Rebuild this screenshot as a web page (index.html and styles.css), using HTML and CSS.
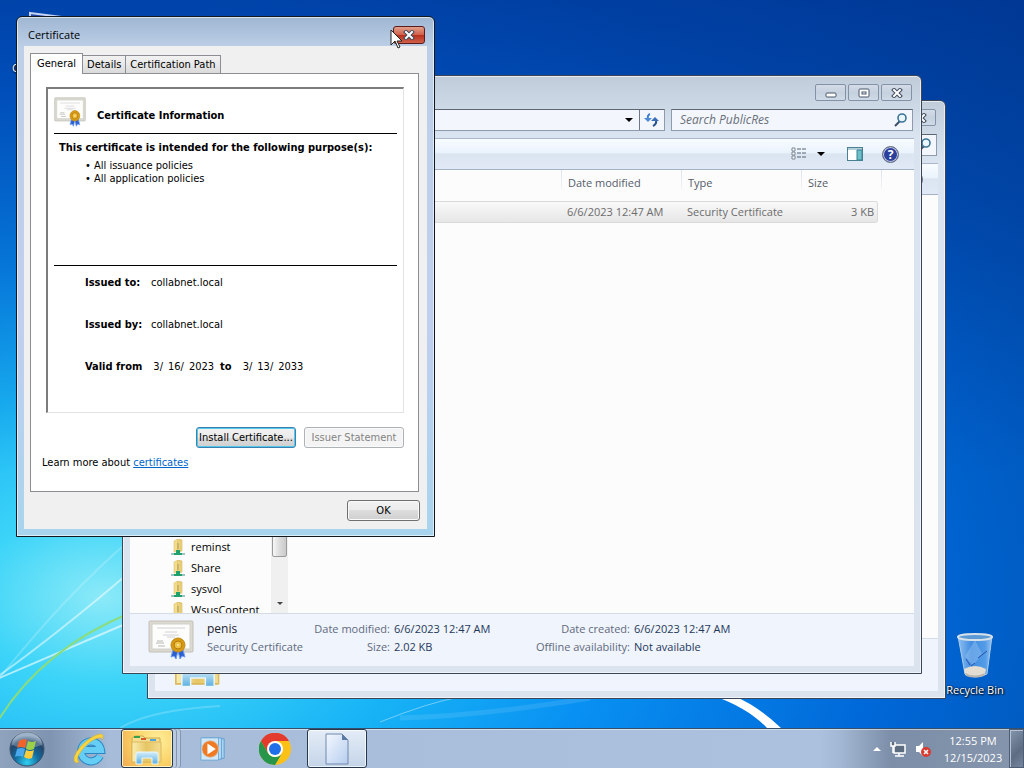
FILE: index.html
```html
<!DOCTYPE html>
<html lang="en">
  <head>
    <meta charset="UTF-8" />
    <meta name="viewport" content="width=device-width, initial-scale=1.0" />
    <title>Desktop</title>
    <link rel="stylesheet" href="styles.css" />
  </head>
  <body>
    <!-- Shared icons -->
    <svg class="sprite" aria-hidden="true">
      <defs>
        <linearGradient id="gold" x1="0" x2="1">
          <stop offset="0" stop-color="#fbeeb4" />
          <stop offset="0.5" stop-color="#e6c664" />
          <stop offset="1" stop-color="#f4dd92" />
        </linearGradient>
        <linearGradient id="glass" x1="0" x2="0" y1="0" y2="1">
          <stop offset="0" stop-color="#d5eefa" />
          <stop offset="1" stop-color="#5aaee0" />
        </linearGradient>
        <linearGradient id="paper" x1="0" x2="1" y1="0" y2="1">
          <stop offset="0" stop-color="#f3f8ff" />
          <stop offset="1" stop-color="#b6cdee" />
        </linearGradient>
        <linearGradient id="bin" x1="0" x2="1">
          <stop offset="0" stop-color="#a8d0f6" />
          <stop offset="0.4" stop-color="#4c94e4" />
          <stop offset="0.8" stop-color="#62a6ec" />
          <stop offset="1" stop-color="#b4d6f6" />
        </linearGradient>
        <radialGradient id="orb" cx="0.5" cy="0.9" r="0.8">
          <stop offset="0" stop-color="#2fd0f2" />
          <stop offset="0.45" stop-color="#126a9e" />
          <stop offset="0.8" stop-color="#23456a" />
          <stop offset="1" stop-color="#7d9ab8" />
        </radialGradient>
        <symbol id="certificate" viewBox="0 0 46 40">
          <rect x="1" y="1" width="44" height="31" rx="1" fill="#dcdad0" stroke="#c2c0b6" />
          <rect x="4" y="4" width="38" height="25" fill="#fdfdfb" stroke="#d0d0ca" />
          <path d="M9 8h28M17 12h12M15 15h16M19 17h8" stroke="#d2d2d8" />
          <path d="M8 23h8M10 26h7M9 21h6" stroke="#b8b8b8" />
          <path d="M25 30l-2 7 3-1 2 3 2-8zM35 30l2 7-3-1-2 3-2-8z" fill="#2a5fd0" stroke="#6f9bf0" />
          <circle cx="30" cy="25" r="7" fill="#d99a12" stroke="#c08a1c" />
          <circle cx="30" cy="25" r="4" fill="#f0c040" stroke="#b07c10" />
          <circle cx="30" cy="25" r="1" fill="#fff2b8" />
        </symbol>
        <symbol id="share-folder" viewBox="0 0 16 16">
          <path d="M4 2l4-2v12l-4 1z" fill="#f3dc8c" stroke="#d9b95c" stroke-width="0.5" />
          <path d="M8 0l4 1v11l-4 1z" fill="url(#gold)" stroke="#c9a647" stroke-width="0.5" />
          <path d="M8 4v6" stroke="#a89a5c" />
          <path d="M1 15h14" stroke="#9cc4c0" stroke-width="2" />
          <path d="M4 15h8" stroke="#1fa06c" stroke-width="2" />
          <path d="M8 11v4" stroke="#1fa06c" stroke-width="4" />
        </symbol>
        <symbol id="magnifier" viewBox="0 0 14 14">
          <path d="M1 13l5-5" stroke="#3a4f66" stroke-width="2" />
          <circle cx="8" cy="5" r="4" fill="#eaf6fc" stroke="#3b7596" stroke-width="1.6" />
        </symbol>
        <symbol id="folders" viewBox="0 0 34 32">
          <path d="M2 5l3-2h8l2 2h15v24H2z" fill="#f6df90" stroke="#d0a848" />
          <path d="M4 4h6" stroke="#38a04c" stroke-width="2" />
          <path d="M11 6h5" stroke="#d25a2c" stroke-width="2" />
          <path d="M20 7h6" stroke="#4ea6d8" stroke-width="2" />
          <path d="M2 9h29v20H2z" fill="url(#gold)" stroke="#dcb95a" />
          <path d="M6 31V21q0-2 2-2h18q2 0 2 2v10h-6v-6H12v6z" fill="url(#glass)" stroke="#e9f6fd" />
        </symbol>
        <symbol id="cross" viewBox="0 0 12 10">
          <path d="M3 2l6 6M9 2L3 8" stroke="#3e4a5c" stroke-width="4" stroke-linecap="square" />
          <path d="M3 2l6 6M9 2L3 8" stroke="#fff" stroke-width="2" stroke-linecap="square" />
        </symbol>
      </defs>
    </svg>

    <main class="desktop">
      <svg class="wallpaper" viewBox="0 0 1024 728" preserveAspectRatio="none" aria-hidden="true">
        <g fill="none" stroke="#fff">
          <path d="M-10 682Q50 640 130 572" stroke-opacity="0.5" stroke-width="2" />
          <path d="M-10 690Q60 600 130 540" stroke-opacity="0.2" stroke-width="2" />
          <path d="M-10 682Q60 652 130 622" stroke-opacity="0.6" stroke-width="2" />
          <path d="M120 728Q150 710 220 706" stroke-opacity="0.2" stroke-width="2" />
          <path d="M380 722Q430 702 460 697" stroke-opacity="0.4" />
          <path d="M400 718Q480 716 590 698" stroke-opacity="0.1" stroke-width="5" />
          <path d="M-4 724Q40 650 130 613" stroke="#8bdc7c" stroke-width="2" />
        </g>
        <path d="M714 696Q748 708 767 728H781Q758 706 734 696z" fill="#fff" />
      </svg>

      <div class="shortcut computer">
        <svg width="48" height="48" viewBox="0 0 48 48" aria-hidden="true">
          <path d="M16 3l32 4v30l-32-4z" fill="#2448a8" stroke="#c5d3f5" stroke-width="2" />
        </svg>
        <span>Computer</span>
      </div>

      <div class="shortcut recycle-bin">
        <svg width="48" height="48" viewBox="0 0 48 48" aria-hidden="true">
          <path d="M7 4h34l-5 38q-12 6-22 0z" fill="url(#bin)" fill-opacity="0.85" stroke="#a9cbee" />
          <path d="M24 8l7 14-9 12-8-10z" fill="#8dbdf0" fill-opacity="0.5" />
          <path d="M15 27l4 6M27 26l9-7M20 34l4-3" stroke="#2450a8" />
          <path d="M13 37q11-6 22 0l-1 6q-10 4-20 0z" fill="#e4ddd2" />
          <path d="M14 41q10 5 20 0l-1 3q-9 3-18 0z" fill="#b8b4b0" />
          <ellipse cx="24" cy="5" rx="17" ry="3" fill="#5c9ad6" stroke="#d6e1ea" stroke-width="2" />
        </svg>
        <span>Recycle Bin</span>
      </div>

      <!-- Explorer window at the back -->
      <section class="window explorer explorer-back" aria-label="Explorer">
        <div class="titlebar">
          <button class="caption-button" aria-label="Close"><svg width="12" height="10"><use href="#cross" /></svg></button>
        </div>
        <div class="navbar">
          <div class="search"><svg width="14" height="14"><use href="#magnifier" /></svg></div>
        </div>
        <div class="commandbar">
          <span class="help">?</span>
        </div>
        <div class="explorer-body"></div>
        <div class="details">
          <svg class="details-folder" width="50" height="46" viewBox="0 0 34 32" preserveAspectRatio="none"><use href="#folders" /></svg>
        </div>
      </section>

      <!-- Explorer window -->
      <section class="window explorer explorer-front" aria-label="PublicRes">
        <div class="titlebar">
          <button class="caption-button" aria-label="Minimize">
            <svg width="12" height="10" viewBox="0 0 12 10"><rect x="1" y="5" width="10" height="4" rx="1" fill="#fff" stroke="#4a566a" /></svg>
          </button>
          <button class="caption-button" aria-label="Maximize">
            <svg width="12" height="10" viewBox="0 0 12 10">
              <rect x="1" y="1" width="10" height="8" rx="1" fill="#fff" stroke="#4a566a" />
              <rect x="4" y="4" width="4" height="2" fill="#fff" stroke="#4a566a" />
            </svg>
          </button>
          <button class="caption-button" aria-label="Close"><svg width="12" height="10"><use href="#cross" /></svg></button>
        </div>

        <div class="navbar">
          <div class="address">
            <input class="address-input" type="text" aria-label="Address" />
            <button class="address-drop" aria-label="Previous locations"><i class="arrow"></i></button>
            <button class="refresh" aria-label="Refresh">
              <svg width="16" height="16" viewBox="0 0 16 16">
                <path d="M6 2Q3 3 4 8" fill="none" stroke="#3d7fd0" stroke-width="2" />
                <path d="M0 6h8l-4 4z" fill="#4a8ad8" />
                <path d="M12 8q1 4-3 6" fill="none" stroke="#2a4f8c" stroke-width="2" />
                <path d="M7 9h8l-4-4z" fill="#3a6cb8" />
              </svg>
            </button>
          </div>
          <div class="search">
            <input type="text" placeholder="Search PublicRes" aria-label="Search PublicRes" />
            <svg width="14" height="14"><use href="#magnifier" /></svg>
          </div>
        </div>

        <div class="commandbar">
          <button class="tool" aria-label="Change view">
            <svg width="16" height="14" viewBox="0 0 16 14">
              <path d="M1 1h3v3H1zM1 5h3v3H1zM1 9h3v3H1z" fill="#fff" stroke="#7c8794" />
              <path d="M6 2h4M11 2h4M6 6h4M11 6h4M6 10h4M11 10h4" stroke="#556272" />
            </svg>
          </button>
          <button class="tool tool-drop" aria-label="More options"><i class="arrow"></i></button>
          <button class="tool tool-pane" aria-label="Preview pane">
            <svg width="16" height="14" viewBox="0 0 16 14">
              <rect x="0.5" y="0.5" width="15" height="13" fill="#fff" stroke="#4a7f94" />
              <path d="M1 2h14" stroke="#6ba0b4" />
              <path d="M10 3h5v10h-5z" fill="#6cc0c8" stroke="#3b8294" />
            </svg>
          </button>
          <button class="help" aria-label="Help">?</button>
        </div>

        <div class="explorer-body">
          <nav class="tree">
            <ul>
              <li><svg width="16" height="16"><use href="#share-folder" /></svg>reminst</li>
              <li><svg width="16" height="16"><use href="#share-folder" /></svg>Share</li>
              <li><svg width="16" height="16"><use href="#share-folder" /></svg>sysvol</li>
              <li><svg width="16" height="16"><use href="#share-folder" /></svg>WsusContent</li>
            </ul>
            <div class="scrollbar">
              <div class="thumb"></div>
              <i class="arrow arrow-small"></i>
            </div>
          </nav>
          <div class="files">
            <table>
              <thead>
                <tr>
                  <th class="col-name"></th>
                  <th class="col-date">Date modified</th>
                  <th class="col-type">Type</th>
                  <th class="col-size">Size</th>
                  <th class="col-rest"></th>
                </tr>
              </thead>
              <tbody>
                <tr>
                  <td></td>
                  <td>6/6/2023 12:47 AM</td>
                  <td>Security Certificate</td>
                  <td class="size">3 KB</td>
                </tr>
              </tbody>
            </table>
          </div>
        </div>

        <div class="details">
          <svg width="46" height="40"><use href="#certificate" /></svg>
          <div class="details-name">
            <strong>penis</strong>
            <span>Security Certificate</span>
          </div>
          <dl class="details-first">
            <dt>Date modified:</dt>
            <dd>6/6/2023 12:47 AM</dd>
            <dt>Size:</dt>
            <dd>2.02 KB</dd>
          </dl>
          <dl class="details-second">
            <dt>Date created:</dt>
            <dd>6/6/2023 12:47 AM</dd>
            <dt>Offline availability:</dt>
            <dd>Not available</dd>
          </dl>
        </div>
      </section>

      <!-- Certificate dialog -->
      <section class="window dialog" role="dialog" aria-labelledby="dialog-title">
        <header class="dialog-title">
          <h1 id="dialog-title">Certificate</h1>
          <button class="dialog-close" aria-label="Close"><svg width="12" height="10"><use href="#cross" /></svg></button>
        </header>
        <div class="dialog-content">
          <div class="tabs" role="tablist">
            <button class="tab active" role="tab" aria-selected="true">General</button>
            <button class="tab" role="tab">Details</button>
            <button class="tab" role="tab">Certification Path</button>
          </div>
          <div class="tab-panel" role="tabpanel">
            <div class="certificate">
              <h2><svg width="32" height="30" viewBox="0 0 46 40" preserveAspectRatio="none"><use href="#certificate" /></svg>Certificate Information</h2>
              <div class="purposes">
                <h3>This certificate is intended for the following purpose(s):</h3>
                <ul>
                  <li>All issuance policies</li>
                  <li>All application policies</li>
                </ul>
              </div>
              <dl class="issue">
                <div><dt>Issued to:</dt><dd>collabnet.local</dd></div>
                <div><dt>Issued by:</dt><dd>collabnet.local</dd></div>
                <div class="valid">
                  <dt>Valid from</dt>
                  <dd><span>3/</span> <span>16/</span> <span>2023</span></dd>
                  <dt>to</dt>
                  <dd><span>3/</span> <span>13/</span> <span>2033</span></dd>
                </div>
              </dl>
            </div>
            <div class="actions">
              <button class="button default">Install Certificate...</button>
              <button class="button" disabled>Issuer Statement</button>
            </div>
            <p class="learn">Learn more about <a href="#">certificates</a></p>
          </div>
          <footer class="dialog-footer">
            <button class="button ok">OK</button>
          </footer>
        </div>
      </section>

      <svg class="cursor" width="14" height="20" viewBox="0 0 14 20" aria-hidden="true">
        <path d="M1 1v15l4-4 3 7 2-1-3-6h5z" fill="#fff" stroke="#222" />
      </svg>
    </main>

    <footer class="taskbar">
      <button class="start" aria-label="Start">
        <svg width="38" height="38" viewBox="0 0 38 38">
          <circle cx="19" cy="19" r="17" fill="url(#orb)" stroke="#3c5068" />
          <path d="M4 15a15 14 0 0 1 30 0q-15 6-30 0z" fill="#fff" fill-opacity="0.25" />
          <path d="M11 11q4-3 8-1l-2 8q-4-2-8 0z" fill="#f0642c" />
          <path d="M20 11q4 2 8 0l-2 8q-4 2-8 0z" fill="#9cd048" />
          <path d="M9 19q4-2 8 0l-2 8q-4-2-8 0z" fill="#4aa8ec" />
          <path d="M18 20q4 2 8 0l-2 8q-4 2-8-1z" fill="#fccc3c" />
        </svg>
      </button>
      <button class="task" aria-label="Internet Explorer">
        <svg width="34" height="34" viewBox="0 0 34 34">
          <path d="M28 24a10 10 0 1 1 1-6H11" fill="none" stroke="#2b86c4" stroke-width="8" />
          <path d="M28 24a10 10 0 1 1 1-6H11" fill="none" stroke="#66cdf4" stroke-width="6" />
          <path d="M4 31Q-2 27 9 14 20 3 28 2q5 0 2 6 1-3-4-2Q18 8 10 18 3 27 7 30z" fill="#f8d440" stroke="#d8aa20" stroke-width="0.5" />
        </svg>
      </button>
      <button class="task open stacked" aria-label="Windows Explorer">
        <svg width="34" height="32"><use href="#folders" /></svg>
      </button>
      <button class="task" aria-label="Windows Media Player">
        <svg width="26" height="26" viewBox="0 0 28 28">
          <path d="M6 3h20v21H6z" fill="#a9d4f2" stroke="#5b9cd0" />
          <path d="M3 2h20v23H3z" fill="#bfe0f6" stroke="#5b9cd0" />
          <path d="M1 2h19v24H1z" fill="#d2e8f8" stroke="#6ba6d4" />
          <circle cx="11" cy="14" r="9" fill="#f07a24" stroke="#d4c4b0" />
          <path d="M8 8l9 6-9 6z" fill="#fff" />
        </svg>
      </button>
      <button class="task" aria-label="Google Chrome">
        <svg width="32" height="32" viewBox="0 0 32 32">
          <circle cx="16" cy="16" r="16" fill="#fbc116" />
          <path d="M2 8A16 16 0 0 1 30 8H16L9 20z" fill="#e33b2e" />
          <path d="M2 8l7 12q3 4 7 4 3 0 6-2L16 32A16 16 0 0 1 2 8z" fill="#27964a" />
          <circle cx="16" cy="16" r="8" fill="#fff" />
          <circle cx="16" cy="16" r="6" fill="#1f70e8" />
        </svg>
      </button>
      <button class="task open current" aria-label="Certificate">
        <svg width="26" height="32" viewBox="0 0 26 32">
          <path d="M2 1h16l6 6v24H2z" fill="url(#paper)" stroke="#7088ac" />
          <path d="M18 1v6h6z" fill="#5a7ba4" />
        </svg>
      </button>

      <div class="tray">
        <button class="tray-icon" aria-label="Show hidden icons"><i class="arrow arrow-up"></i></button>
        <button class="tray-icon" aria-label="Network">
          <svg width="16" height="16" viewBox="0 0 16 16">
            <path d="M4 4h11v8H4z" fill="#5c6c80" stroke="#fff" stroke-width="1.5" />
            <path d="M5 15h9M9 12v3" stroke="#fff" stroke-width="1.5" />
            <path d="M1 1v4h4V1M3 5v7" fill="#5c6c80" stroke="#fff" stroke-width="1.5" />
          </svg>
        </button>
        <button class="tray-icon" aria-label="Volume muted">
          <svg width="16" height="16" viewBox="0 0 16 16">
            <path d="M1 5h3l4-4v14l-4-4H1z" fill="#fff" />
            <circle cx="11" cy="11" r="5" fill="#d83a30" />
            <path d="M9 9l4 4M13 9l-4 4" stroke="#fff" stroke-width="1.5" />
          </svg>
        </button>
      </div>
      <time class="clock"><span>12:55 PM</span><span>12/15/2023</span></time>
      <button class="show-desktop" aria-label="Show desktop"></button>
    </footer>
  </body>
</html>
```

FILE: styles.css
```css
/* Base Styles */
* {
  box-sizing: border-box;
  margin: 0;
  padding: 0;
}

body {
  font-family: "Segoe UI", "Open Sans", "Noto Sans", sans-serif;
  font-size: 11px;
  line-height: 16px;
  color: #1a1a1a;
  height: 100vh;
  display: flex;
  flex-direction: column;
  overflow: hidden;
}

button,
input {
  font: inherit;
  color: inherit;
  border: none;
  background: none;
  min-width: 0;
}

ul {
  list-style: none;
}

svg {
  display: block;
  flex: none;
}

.sprite {
  position: absolute;
  width: 0;
  height: 0;
}

/* Desktop */
.desktop {
  flex: 1;
  position: relative;
  overflow: hidden;
  background:
    linear-gradient(rgba(0, 40, 140, 0.5), rgba(0, 40, 140, 0.3) 30%, rgba(0, 40, 140, 0) 65%),
    radial-gradient(
      ellipse 90% 84% at 10% 82%,
      #8ceaf8 0%,
      #3cd4f8 14%,
      #18b4f6 34%,
      #0890f2 55%,
      #0068d8 85%,
      #0056b8 110%,
      #00489c 140%
    );
}

.wallpaper {
  position: absolute;
  inset: 0;
  width: 100%;
  height: 100%;
}

.shortcut {
  position: absolute;
  width: 76px;
  display: flex;
  flex-direction: column;
  align-items: center;
  gap: 2px;
  color: white;
  text-shadow: 1px 1px 2px #000, 0 0 2px #000;
}

.computer {
  top: 10px;
  left: 0;
}

.recycle-bin {
  right: 11px;
  bottom: 30px;
}

/* Windows */
.window {
  position: absolute;
  border: 1px solid #3a4658;
  border-radius: 6px 6px 0 0;
  box-shadow: inset 0 0 0 1px rgba(255, 255, 255, 0.6);
  display: flex;
  flex-direction: column;
}

.arrow {
  display: block;
  width: 0;
  height: 0;
  border: 4px solid transparent;
  border-top-color: #000;
  border-bottom: none;
}

.arrow-small {
  border-width: 3px;
  border-bottom: none;
  border-top-color: #444;
}

.arrow-up {
  border-top: none;
  border-bottom: 4px solid white;
}

/* Explorer */
.explorer {
  padding: 0 7px 7px;
  background: linear-gradient(#c0ccda, #d9e4f0 60px, #dae3ee);
}

.explorer-front {
  top: 75px;
  right: 102px;
  bottom: 54px;
  left: 122px;
}

.explorer-back {
  top: 100px;
  right: 78px;
  bottom: 29px;
  left: 147px;
}

.titlebar {
  height: 32px;
  padding: 8px 2px 0;
  display: flex;
  justify-content: flex-end;
  gap: 2px;
}

.caption-button {
  width: 31px;
  height: 17px;
  border: 1px solid #8392a6;
  border-radius: 2px;
  display: flex;
  align-items: center;
  justify-content: center;
  background: linear-gradient(#d3dce7, #c6d1df 50%, #cfdae7);
}

.navbar {
  height: 30px;
  padding: 1px 1px 7px;
  display: flex;
  justify-content: flex-end;
  gap: 6px;
}

.address,
.search {
  border: 1px solid #8d9bad;
  border-top-color: #5a6676;
  background: #f3f7fd;
  display: flex;
  align-items: center;
}

.address {
  flex: 1;
}

.address-input {
  flex: 1;
}

.address-drop {
  width: 20px;
  height: 100%;
  display: flex;
  align-items: center;
  justify-content: center;
}

.refresh {
  width: 25px;
  height: 100%;
  border-left: 1px solid #6c7889;
  display: flex;
  align-items: center;
  justify-content: center;
}

.search {
  width: 242px;
  padding: 0 4px 0 8px;
  justify-content: flex-end;
}

.search input {
  flex: 1;
  font-size: 12px;
}

.search input::placeholder {
  color: #6a6f78;
  font-style: italic;
}

.commandbar {
  height: 32px;
  padding: 0 15px;
  border-top: 1px solid #a9b8ca;
  border-bottom: 1px solid #a4b2c6;
  background: linear-gradient(#f8fcff, #eaf3fc 45%, #dbe5f2 50%, #e0e9f5);
  display: flex;
  align-items: center;
  justify-content: flex-end;
}

.tool-drop {
  margin: 0 22px 0 10px;
}

.tool-pane {
  margin-right: 19px;
}

.help {
  width: 17px;
  height: 17px;
  border: 1px solid #6f7688;
  border-radius: 50%;
  box-shadow: inset 0 0 0 1px #c8cee0;
  background: #2c3f9c;
  color: white;
  font-size: 12px;
  font-weight: 700;
  line-height: 15px;
  text-align: center;
}

.explorer-body {
  flex: 1;
  min-height: 0;
  background: #fcfcfc;
  display: flex;
}

/* Folder tree */
.tree {
  width: 158px;
  display: flex;
  overflow: hidden;
  color: #000;
}

.tree ul {
  flex: 1;
  padding-left: 40px;
  margin-bottom: -7px;
  display: flex;
  flex-direction: column;
  justify-content: flex-end;
}

.tree li {
  height: 21px;
  display: flex;
  align-items: center;
  gap: 5px;
}

.scrollbar {
  width: 17px;
  background: #f0f0f0;
  display: flex;
  flex-direction: column;
  align-items: center;
  padding-bottom: 8px;
}

.thumb {
  flex: 1;
  width: 15px;
  margin-bottom: 45px;
  border: 1px solid #9a9a9a;
  border-radius: 2px;
  background: linear-gradient(to right, #f6f6f6, #dcdcdc 50%, #cacaca);
}

/* File list */
.files {
  flex: 1;
}

table {
  width: 100%;
  table-layout: fixed;
  border-spacing: 0;
}

th {
  height: 26px;
  padding: 0 7px;
  color: #555d6a;
  font-weight: 400;
  text-align: left;
  background: linear-gradient(#dde3ea, #f4f6f8) no-repeat 0 0 / 1px 20px;
}

.col-name {
  background: none;
}

.col-date,
.col-type {
  width: 120px;
}

.col-size {
  width: 77px;
}

.col-rest {
  width: 36px;
  background-position: 3px 0;
}

tbody::before {
  content: "";
  display: block;
  height: 5px;
}

td {
  height: 22px;
  padding: 0 6px;
  color: #6c6c6c;
  border: solid #dadada;
  border-width: 1px 0;
  background: linear-gradient(#f9f9f9, #e6e6e6);
}

.size {
  padding: 0 3px;
  border-right-width: 1px;
  border-radius: 0 3px 3px 0;
  text-align: right;
}

/* Details pane */
.details {
  height: 53px;
  padding: 6px 18px;
  border-top: 1px solid #d3dbe6;
  background: #f0f4fc;
  display: flex;
  line-height: 18px;
}

.details-name {
  width: 100px;
  margin-left: 13px;
  color: #5f6a7e;
  white-space: nowrap;
}

.details-name strong {
  display: block;
  color: #1e2330;
  font-size: 12px;
  font-weight: 400;
}

.details dl {
  display: grid;
  column-gap: 4px;
  white-space: nowrap;
  align-content: start;
}

.details-first {
  grid-template-columns: 83px 134px;
}

.details-second {
  grid-template-columns: 102px auto;
}

.details dt {
  color: #5f6a7e;
  text-align: right;
}

.details dd {
  color: #1e395b;
}

.explorer-back .details {
  padding-top: 3px;
}

/* Certificate dialog */
.dialog {
  top: 16px;
  left: 16px;
  width: 419px;
  padding: 0 7px 7px;
  border-color: #101820;
  background: linear-gradient(to bottom, #9fb6d2, #bccfe6 30px, #c0cfee 60%, #a8d4ee);
  font-family: Tahoma, "DejaVu Sans Condensed", "DejaVu Sans", sans-serif;
  line-height: 13px;
  color: #000;
}

.dialog-title {
  height: 29px;
  padding: 6px 2px 0 4px;
  display: flex;
  justify-content: space-between;
}

.dialog-title h1 {
  font-family: "Segoe UI", "Open Sans", "Noto Sans", sans-serif;
  font-size: 11px;
  font-weight: 400;
  line-height: 24px;
}

.dialog-close {
  width: 32px;
  height: 18px;
  margin-top: 3px;
  border: 1px solid #5a1c1c;
  border-radius: 3px;
  display: flex;
  align-items: center;
  justify-content: center;
  background: linear-gradient(#e2a08c, #d0614c 48%, #b8321e 52%, #d0604a);
}

.dialog-content {
  padding: 7px 7px 8px 8px;
  background: #f0f0f0;
}

.tabs {
  height: 20px;
  display: flex;
  align-items: flex-end;
}

.tab {
  height: 18px;
  padding: 0 4px;
  margin-left: -1px;
  border: 1px solid #8c8e94;
  border-bottom: none;
  background: linear-gradient(#f2f2f2, #e8e8e8 50%, #dadada);
}

.tab.active {
  height: 21px;
  margin: 0 0 -1px -2px;
  padding: 0 6px 2px;
  z-index: 1;
  background: white;
}

.tab-panel {
  margin: 0 1px 8px -2px;
  padding: 13px 14px 22px 11px;
  border: 1px solid #8c8e94;
  background: white;
}

.certificate {
  height: 326px;
  margin-left: 4px;
  padding: 8px 6px;
  border: 2px solid #7c7c7c;
  border-width: 2px 1px 1px 2px;
  border-right-color: #e3e3e3;
  border-bottom-color: #e3e3e3;
}

.certificate h2 {
  height: 37px;
  border-bottom: 1px solid #000;
  display: flex;
  gap: 11px;
  font-size: 11px;
  line-height: 38px;
}

.purposes {
  height: 132px;
  padding: 7px 5px;
  border-bottom: 1px solid #000;
}

.purposes h3 {
  font-size: 11px;
  white-space: nowrap;
}

.purposes ul {
  padding: 5px 0 0 26px;
}

.purposes li::before {
  content: "• ";
}

.issue {
  padding: 10px 0 0 31px;
}

.issue div {
  height: 42px;
  display: flex;
}

.issue dt {
  min-width: 66px;
  font-weight: 700;
}

.issue .valid {
  gap: 6px;
}

.issue .valid dt {
  min-width: 0;
}

.issue .valid dd {
  display: flex;
  gap: 5px;
  padding-left: 5px;
}

.actions {
  margin-top: 14px;
  display: flex;
  justify-content: flex-end;
  gap: 8px;
}

.button {
  width: 100px;
  height: 21px;
  border: 1px solid #707070;
  border-radius: 3px;
  box-shadow: inset 0 0 0 1px #fafafa;
  background: linear-gradient(#f2f2f2, #ebebeb 50%, #dddddd 50%, #cfcfcf);
  text-align: center;
  white-space: nowrap;
}

.button.default {
  border-color: #3c7fb1;
  box-shadow: inset 0 0 0 1px #52c8ea;
}

.button:disabled {
  border-color: #adb2b5;
  background: #f4f4f4;
  color: #838383;
}

.learn {
  margin-top: 8px;
}

.learn a {
  color: #0066cc;
}

.dialog-footer {
  display: flex;
  justify-content: flex-end;
}

.button.ok {
  width: 73px;
}

.cursor {
  position: absolute;
  top: 29px;
  left: 390px;
}

/* Taskbar */
.taskbar {
  height: 40px;
  border-top: 1px solid #35506c;
  box-shadow: inset 0 1px 0 rgba(255, 255, 255, 0.5);
  background: linear-gradient(to right, #8fa3be, #7f94b0 50px, #a6bcd8 110px, #abc1de 80%, #a3b8d4 82%, #7c8ea8 87%, #8595ac);
  display: flex;
  align-items: stretch;
}

.start {
  width: 54px;
  display: flex;
  align-items: center;
  justify-content: center;
}

.task {
  width: 60px;
  margin-right: 2px;
  display: flex;
  align-items: center;
  justify-content: center;
}

.start + .task {
  margin-left: 5px;
}

.task.open {
  border: 1px solid #26384e;
  border-radius: 3px;
  box-shadow: inset 0 0 0 1px rgba(255, 255, 255, 0.7);
}

.task.stacked {
  width: 52px;
  margin-right: 10px;
  background: radial-gradient(circle at 70% 30%, #fff0a0, #fbd468 50%, #f0a850);
  box-shadow: inset 0 0 0 1px #fff2c0, 3px 0 0 #b9cadf, 4px 0 0 #8397b2, 7px 0 0 #b9cadf, 8px 0 0 #8397b2;
}

.task.current {
  background: linear-gradient(#e4edf7, #c4d4e8);
}

.tray {
  margin-left: auto;
  display: flex;
  align-items: center;
  gap: 9px;
}

.clock {
  width: 72px;
  margin-left: 6px;
  padding-top: 3px;
  color: white;
  line-height: 17px;
  text-align: center;
}

.clock span {
  display: block;
}

.show-desktop {
  width: 15px;
  border: 1px solid #4d5d73;
  box-shadow: inset 1px 1px 0 #b4c2d4;
  background: linear-gradient(135deg, #8495ac, #5d6c82 60%, #75869e);
}
```
